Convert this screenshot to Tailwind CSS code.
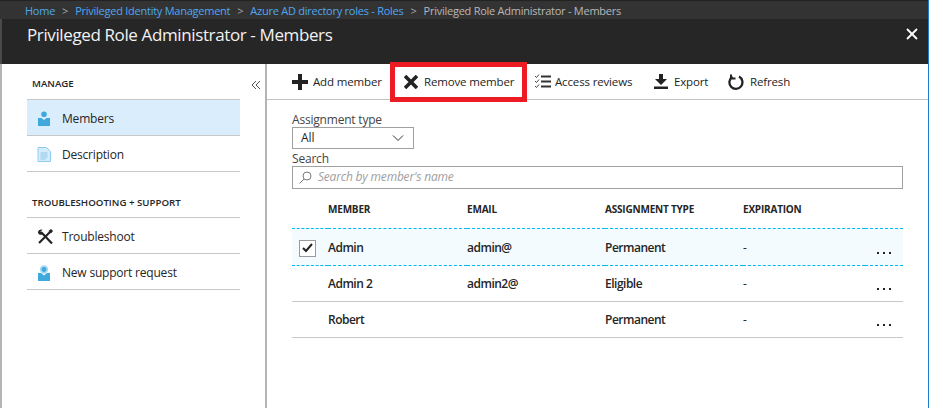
<!DOCTYPE html>
<html>
<head>
    <title>Privileged Role Administrator - Members</title>
    <script src="https://cdn.jsdelivr.net/npm/@tailwindcss/browser@4"></script>
</head>
<body class="bg-white overflow-hidden font-['Open_Sans',sans-serif] text-[#252525]">
<div class="relative w-[929px] h-[408px] overflow-hidden flex flex-col border-r border-r-[#1a7fd0]">
    <!-- breadcrumb -->
    <div class="h-[19px] bg-[#333333] border-t border-t-[#222222] pl-[25px] pt-[2px] flex items-center gap-[7px] text-[11px] tracking-[-0.25px] whitespace-nowrap">
        <span class="text-[#4fa8f0]">Home</span><span class="text-[#aaaaaa]">&gt;</span>
        <span class="text-[#4fa8f0]">Privileged Identity Management</span><span class="text-[#aaaaaa]">&gt;</span>
        <span class="text-[#4fa8f0]">Azure AD directory roles - Roles</span><span class="text-[#aaaaaa]">&gt;</span>
        <span class="text-[#b8b8b8]">Privileged Role Administrator - Members</span>
    </div>
    <!-- title bar -->
    <div class="h-[45px] bg-[#262626] border-l-2 border-l-[#4a4a4a] pl-[25px] pr-[10px] flex items-start justify-between">
        <h1 class="text-[17px] leading-[32px] tracking-[-0.38px] text-[#f2f2f2]">Privileged Role Administrator - Members</h1>
        <svg class="w-3 h-3 mt-[9px]" viewBox="0 0 12 12"><path d="M1 1l10 10M11 1L1 11" stroke="#fff" stroke-width="1.8"/></svg>
    </div>

    <div class="flex flex-1 min-h-0">
        <!-- sidebar -->
        <aside class="w-[267px] shrink-0 border-l-2 border-l-[#b4b4b4] border-r-2 border-r-[#b4b4b4] pl-[25px] pr-[25px] relative">
            <div class="h-[36px] pl-[5px] pt-[6px] flex items-center border-b border-[#c8c8c8] text-[9.7px] font-semibold">MANAGE</div>
            <svg class="absolute left-[249px] top-[16px] w-[10px] h-[10px]" viewBox="0 0 10 10" fill="none" stroke="#555" stroke-width="1"><path d="M5 1L1 5l4 4M9 1L5 5l4 4"/></svg>
            <div class="h-[36px] pt-[2px] flex items-center bg-[#d9edfc] border-b border-[#c8c8c8] text-[12px] tracking-[-0.2px]">
                <svg class="w-3 h-[15px] ml-[11px] mr-[12px]" viewBox="0 0 12 15" fill="#3fa9dc"><circle cx="6" cy="3.2" r="2.8"/><path d="M0 7h3.5l2.5 2 2.5-2H12v8H0z"/></svg>Members
            </div>
            <div class="h-[36px] pt-[2px] flex items-center border-b border-[#c8c8c8] text-[12px] tracking-[-0.2px]">
                <svg class="w-[14px] h-[15px] ml-[10px] mr-[11px]" viewBox="0 0 14 15"><path d="M1 .5h8.5l4 4v10H1z" fill="#d4ecfa" stroke="#8fcdf0"/><path d="M3.5 6h7M3.5 8h7M3.5 10h7M3.5 12h5" stroke="#7cbfe6" stroke-width=".8"/></svg>Description
            </div>
            <div class="h-[46px] pl-[5px] pt-[17px] flex items-center border-b border-[#c8c8c8] text-[9.7px] font-semibold whitespace-nowrap">TROUBLESHOOTING + SUPPORT</div>
            <div class="h-[36px] pt-[2px] flex items-center border-b border-[#c8c8c8] text-[12px] tracking-[-0.2px]">
                <svg class="w-[16px] h-[16px] ml-[10px] mr-[9px]" viewBox="0 0 16 16" fill="none" stroke="#222"><path d="M4 3l11 11.500" stroke-width="2.200"/><path d="M14 2L2 14" stroke-width="2.200"/><path d="M1 4a3.200 3.200 0 0 0 4.500 1.200L3.500 2.500 5.500.8A3.200 3.200 0 0 0 1 4z" fill="#222" stroke="none"/><path d="M11.500 2L14 0l2 2-2 2.500z" fill="#222" stroke="none"/></svg>Troubleshoot
            </div>
            <div class="h-[36px] pt-[2px] flex items-center border-b border-[#c8c8c8] text-[12px] tracking-[-0.2px]">
                <svg class="w-[12px] h-[16px] ml-[11px] mr-[12px]" viewBox="0 0 12 16" fill="#3fa9dc"><path d="M0 8h3L6 10.500 9 8h3v8H0z"/><circle cx="6" cy="4.500" r="4.200" fill="#a6d9f1"/><circle cx="6" cy="4.500" r="2.400"/></svg>New support request
            </div>
        </aside>

        <!-- main -->
        <main class="flex-1 min-w-0">
            <div class="h-[36px] pl-[25px] flex items-center border-b border-[#c4c4c4] text-[11.5px] tracking-[-0.15px] whitespace-nowrap">
                <svg class="w-4 h-4 mr-[5px]" viewBox="0 0 16 16" fill="#222"><path d="M6 0h4v6h6v4h-6v6H6v-6H0V6h6z"/></svg>
                <span class="w-[91px]">Add member</span>
                <svg class="w-[14px] h-[14px] mr-[6px]" viewBox="0 0 14 14" fill="none" stroke="#222" stroke-width="3.600"><path d="M1 1l12 12M13 1L1 13"/></svg>
                <span class="w-[111px]">Remove member</span>
                <svg class="w-4 h-[15px] mr-[4px]" viewBox="0 0 16 15" fill="none" stroke="#333"><path d="M0 2l1.500 1.500L4 .5M0 7l1.500 1.500L4 5.500M0 12l1.500 1.500L4 10.500" stroke-width=".9"/><path d="M6 2.500h10M6 7.500h10M6 12.500h10" stroke-width="1.800"/></svg>
                <span class="w-[99px]">Access reviews</span>
                <svg class="w-[14px] h-[15px] mr-[6px]" viewBox="0 0 14 15" fill="#222"><path d="M5 0h4v5h4L7 11 1 5h4zM0 12.500h14V15H0z"/></svg>
                <span class="w-[54px]">Export</span>
                <svg class="w-4 h-4 mr-[6px]" viewBox="0 0 16 16" fill="none" stroke="#222" stroke-width="2.300"><path d="M11 2.600A6.500 6.500 0 1 1 4.500 2.800"/><path d="M3 .5v4h4.500" stroke-width="2"/></svg>
                <span>Refresh</span>
            </div>

            <div class="pl-[25px] pr-[25px]">
                <label class="block mt-[10px] h-[17px] text-[12px] leading-[20px] tracking-[-0.2px] text-[#444]">Assignment type</label>
                <div class="w-[122px] h-[22px] border border-[#a0a0a0] pl-[8px] pr-[9px] flex items-center justify-between text-[12px]">
                    All
                    <svg class="w-3 h-2" viewBox="0 0 12 8" fill="none" stroke="#333"><path d="M1 1.500l5 5 5-5"/></svg>
                </div>
                <label class="block mt-[1px] h-[16px] text-[12px] leading-[18px] tracking-[-0.2px] text-[#444]">Search</label>
                <div class="h-[23px] border border-[#a0a0a0] pl-[6px] pb-[2px] flex items-center text-[12px] italic tracking-[-0.2px] text-[#a0a0a0]">
                    <svg class="w-[13px] h-[13px] mt-[2px] mr-[6px]" viewBox="0 0 13 13" fill="none" stroke="#777"><circle cx="8" cy="5" r="4"/><path d="M5 8l-4.500 4.500"/></svg>Search by member's name
                </div>

                <table class="w-full table-fixed mt-[3px] text-[12px] tracking-[-0.5px] border-separate border-spacing-0">
                    <thead>
                        <tr class="h-[36px] text-left text-[10px] font-bold tracking-[-0.2px]">
                            <th class="w-[36px]"></th>
                            <th class="w-[139px] font-bold align-middle pb-[2px]">MEMBER</th>
                            <th class="w-[138px] font-bold align-middle pb-[2px]">EMAIL</th>
                            <th class="w-[138px] font-bold align-middle pb-[2px]">ASSIGNMENT TYPE</th>
                            <th class="font-bold align-middle pb-[2px]">EXPIRATION</th>
                            <th class="w-[38px]"></th>
                        </tr>
                    </thead>
                    <tbody class="font-semibold">
                        <tr class="h-[38px] bg-[#f3fbfe] [&_td]:border-y [&_td]:border-dashed [&_td]:border-[#00b9f2] [&_td]:pt-[2px]">
                            <td><div class="ml-[7px] w-[17px] h-[17px] border border-[#9a9a9a] bg-white flex items-center justify-center"><svg class="w-[11px] h-[10px]" viewBox="0 0 11 10" fill="none" stroke="#222" stroke-width="2"><path d="M1 5l3 3 6-7"/></svg></div></td>
                            <td>Admin</td><td>admin@</td><td>Permanent</td><td class="font-normal">-</td>
                            <td class="align-bottom"><div class="flex gap-[4px] mb-[11px] ml-[12px]"><i class="w-[2px] h-[2px] bg-[#222]"></i><i class="w-[2px] h-[2px] bg-[#222]"></i><i class="w-[2px] h-[2px] bg-[#222]"></i></div></td>
                        </tr>
                        <tr class="h-[36px] [&_td]:border-b [&_td]:border-[#c8c8c8]">
                            <td></td><td>Admin 2</td><td>admin2@</td><td>Eligible</td><td class="font-normal">-</td>
                            <td class="align-bottom"><div class="flex gap-[4px] mb-[11px] ml-[12px]"><i class="w-[2px] h-[2px] bg-[#222]"></i><i class="w-[2px] h-[2px] bg-[#222]"></i><i class="w-[2px] h-[2px] bg-[#222]"></i></div></td>
                        </tr>
                        <tr class="h-[36px] [&_td]:border-b [&_td]:border-[#c8c8c8]">
                            <td></td><td>Robert</td><td></td><td>Permanent</td><td class="font-normal">-</td>
                            <td class="align-bottom"><div class="flex gap-[4px] mb-[11px] ml-[12px]"><i class="w-[2px] h-[2px] bg-[#222]"></i><i class="w-[2px] h-[2px] bg-[#222]"></i><i class="w-[2px] h-[2px] bg-[#222]"></i></div></td>
                        </tr>
                    </tbody>
                </table>
            </div>
        </main>
    </div>

    <!-- annotation -->
    <div class="absolute left-[390px] top-[62px] w-[137px] h-[40px] border-[5px] border-[#ed1c24]"></div>
</div>
</body>
</html>
